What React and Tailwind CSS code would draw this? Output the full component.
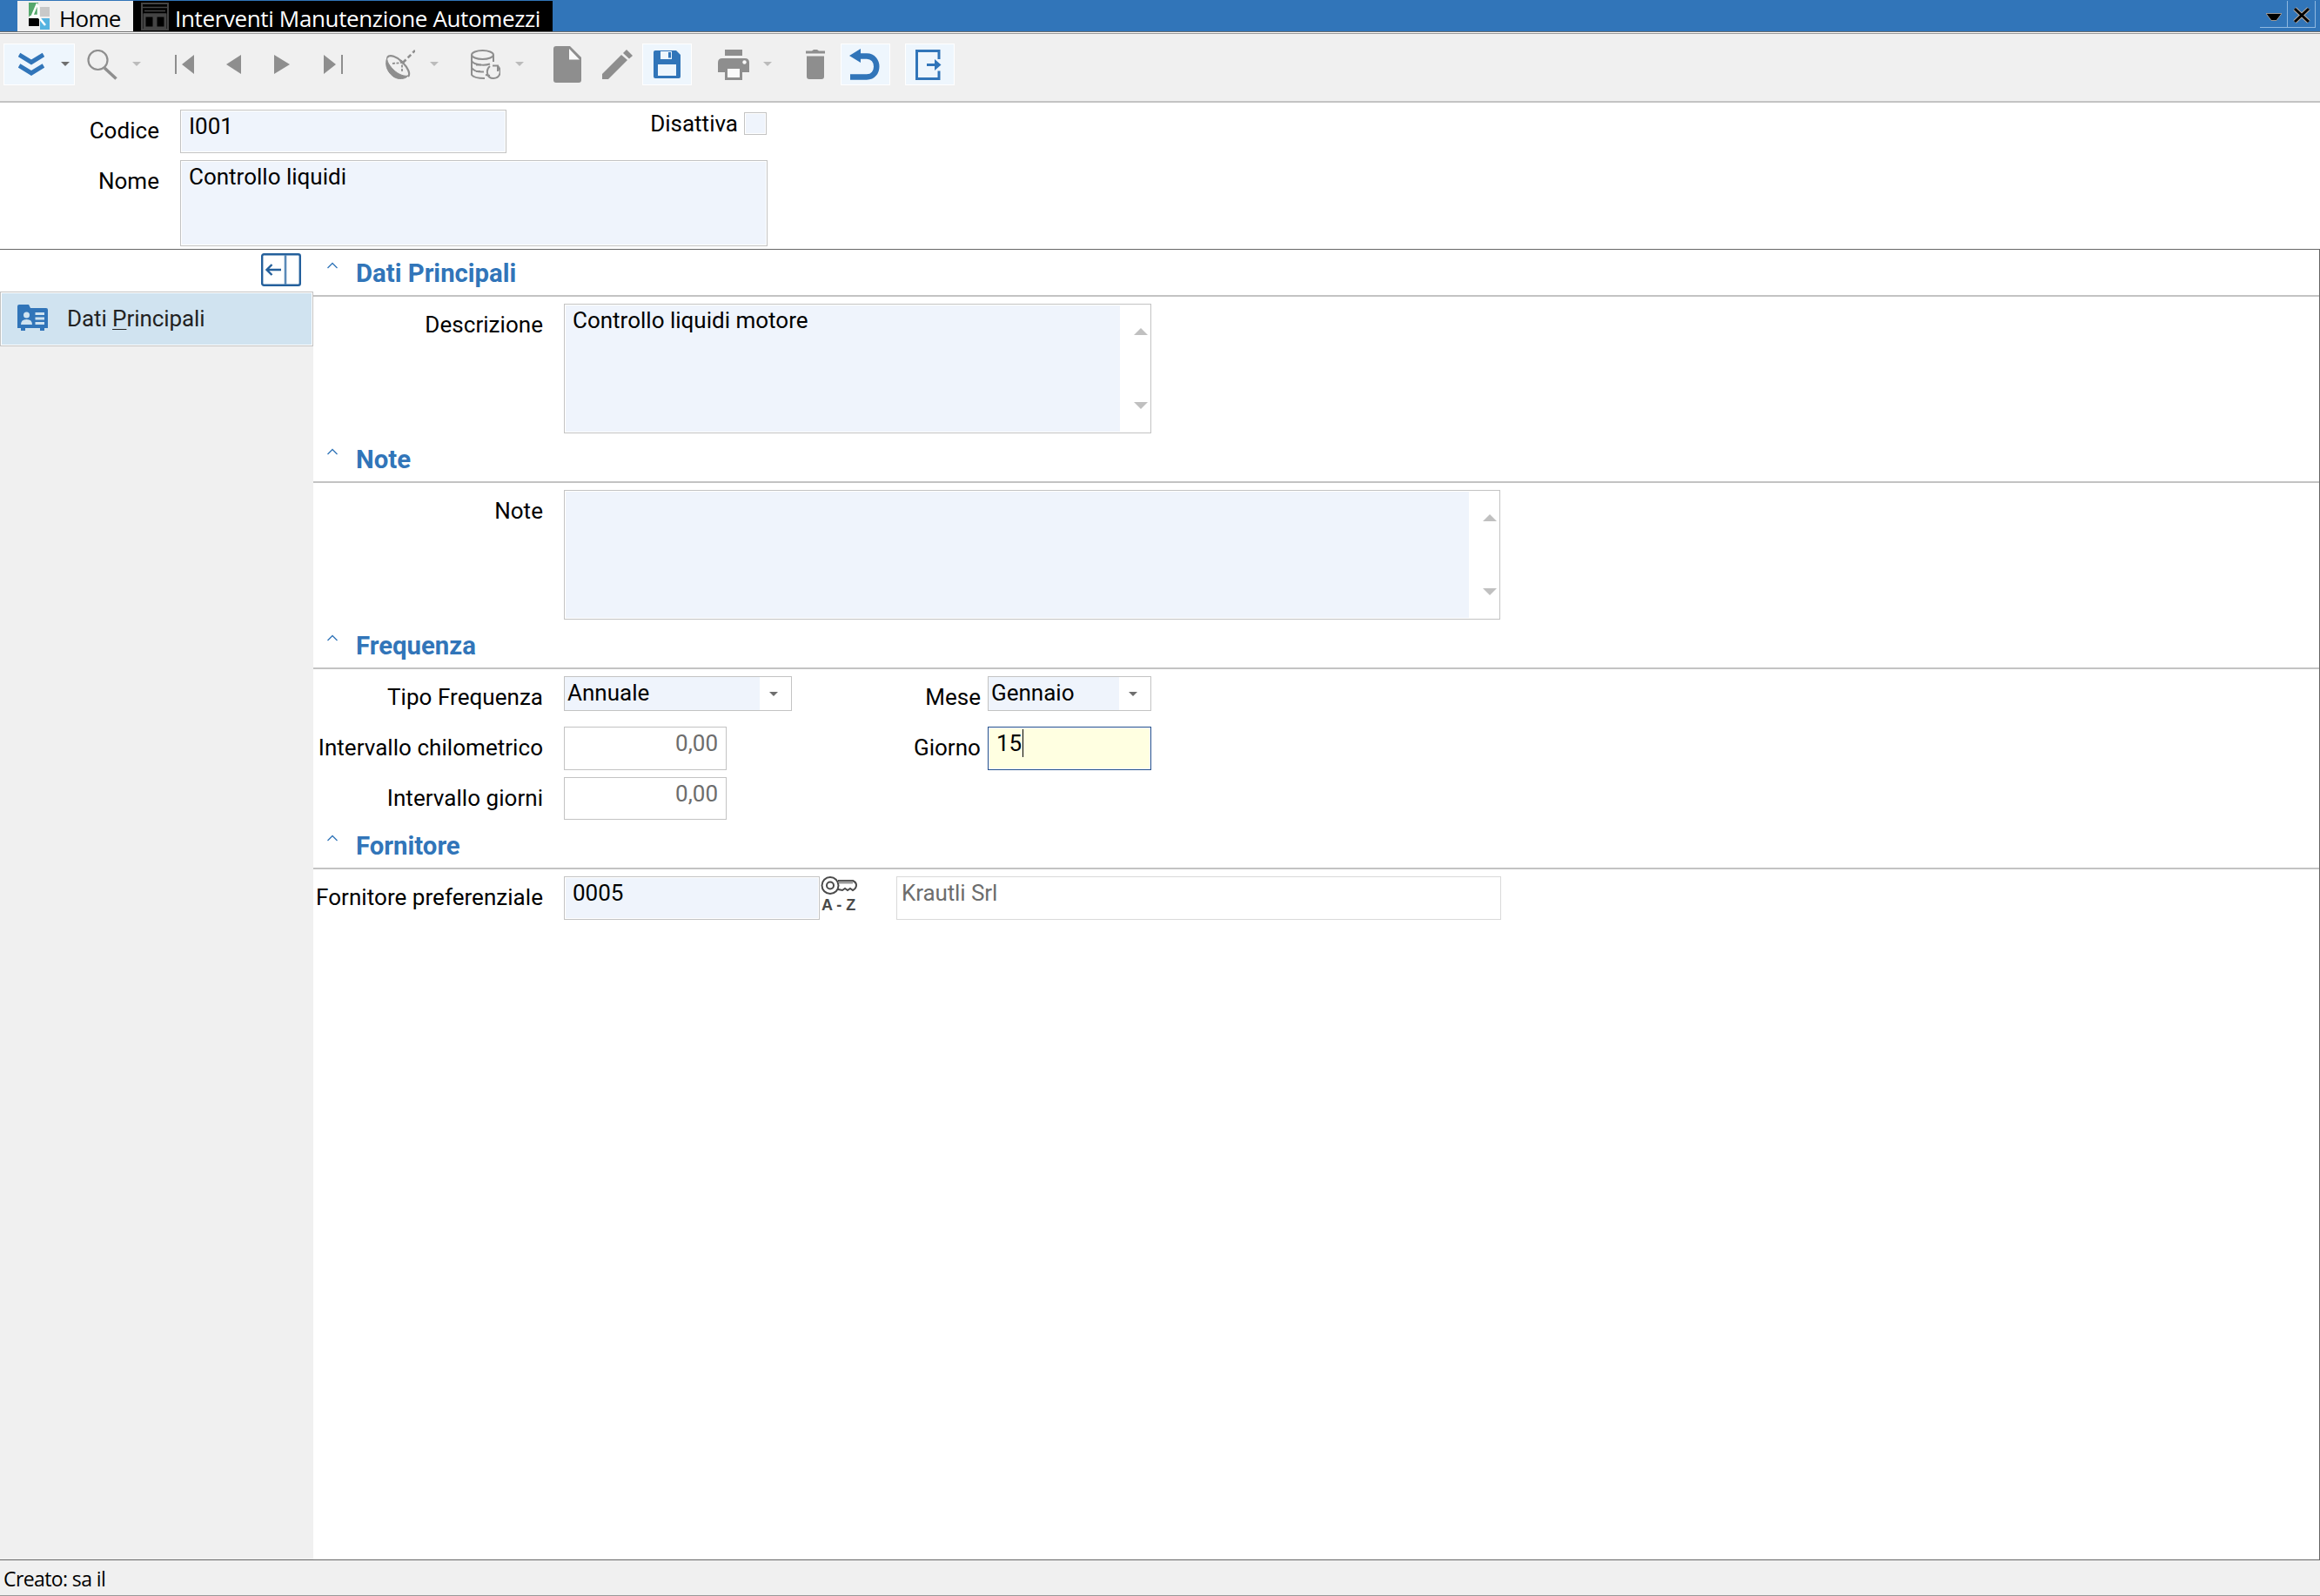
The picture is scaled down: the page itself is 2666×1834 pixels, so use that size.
import React from "react";
import { clsx } from "clsx";

/* Small shared shapes */

function Triangle({ up, className }) {
  return (
    <svg viewBox="0 0 16 8" preserveAspectRatio="none" className={className} fill="currentColor">
      <path d={up ? "M8 0L16 8H0Z" : "M0 0H16L8 8Z"} />
    </svg>
  );
}

function DropArrow({ className }) {
  return <Triangle className={clsx("w-[10px] h-[5px] shrink-0", className)} />;
}

/* Title bar */

function HomeLogo() {
  return (
    <svg width="25" height="31" viewBox="0 0 25 31" className="shrink-0">
      <path d="M0 0H10L0 17Z" fill="#55a86c" />
      <path d="M4 0H11V15H0V8Z" fill="#55a86c" />
      <path d="M13 5H24V16H13Z" fill="#c9c9c9" />
      <path d="M0 18H12V27H0Z" fill="#000" />
      <path d="M13 18H24V31H13Z" fill="#55b3e0" />
      <path d="M10 1L4 15H11M11 3V16L19 26" fill="none" stroke="#fff" strokeWidth="2.5" />
    </svg>
  );
}

function FormIcon() {
  return (
    <svg width="32" height="32" viewBox="0 0 32 32" className="shrink-0" fill="none" stroke="#444" strokeWidth="2">
      <path d="M1 1H31V31H1Z" />
      <path d="M1 5.500H31M4 9.500H28" strokeWidth="1.5" />
      <path d="M3 14.500H29" strokeWidth="4" />
      <path d="M4 14H28V29H4Z" strokeWidth="3" />
      <path d="M16 14V29" strokeWidth="5" />
    </svg>
  );
}

function TitleBar() {
  return (
    <div className="flex h-9 bg-[#3175b9] pt-px pl-5 font-['Open_Sans','Noto_Sans',sans-serif] text-[26px] leading-[35px]">
      <div className="flex w-[133px] bg-[#f0f0f0] pl-[13px] pt-[2px] text-black">
        <HomeLogo />
        <span className="mt-px ml-[10px] tracking-[-0.7px]">Home</span>
      </div>
      <div className="flex h-9 w-[482px] bg-black pl-[9px] pt-[2px] text-white">
        <FormIcon />
        <span className="mt-px ml-[7px] whitespace-nowrap tracking-[-0.36px]">
          Interventi Manutenzione Automezzi
        </span>
      </div>
      <div className="ml-auto mr-[5px] flex h-[31px] border-b border-[#8fb8e0] text-black">
        <div className="flex w-8 justify-center border-r border-[#8fb8e0] pt-[14px]">
          <svg width="18" height="9" viewBox="0 0 18 9">
            <path d="M0 .5H18L12 8.500H6Z" fill="#000" stroke="#b9aba0" strokeWidth=".8" />
          </svg>
        </div>
        <div className="flex w-8 justify-center border-r border-[#8fb8e0] pt-[7px]">
          <svg width="20" height="19" viewBox="0 0 20 19" fill="none">
            <path d="M2 2L18 17M18 2L2 17" stroke="#b9aba0" strokeWidth="5" />
            <path d="M2 2L18 17M18 2L2 17" stroke="#000" strokeWidth="3" />
          </svg>
        </div>
      </div>
    </div>
  );
}

/* Toolbar */

function Tool({ children, active, arrow, className }) {
  return (
    <div
      className={clsx(
        "flex h-12 shrink-0 items-center",
        active ? "border border-white bg-[#eef6fd] text-[#3175b9]" : "text-[#8e8e8e]",
        className
      )}
    >
      {children}
      {arrow && <DropArrow className={clsx("mb-px", arrow)} />}
    </div>
  );
}

function Toolbar() {
  return (
    <div className="border-t border-[#6f6f6f] bg-white pt-px">
      <div className="flex h-[80px] border-t border-b-2 border-t-[#999] border-b-[#c3c3c3] bg-[#f0f0f0] pt-[11px] pl-1">
        <Tool active arrow="ml-[19px] text-[#6e6e6e]" className="w-[82px] pl-4">
          <svg width="30" height="28" viewBox="0 0 30 28" fill="none" stroke="currentColor" strokeWidth="5">
            <path d="M1 3L15 11.5L29 3M1 15.5L15 24L29 15.5" />
          </svg>
        </Tool>
        <Tool arrow="ml-[17px] text-[#bbb]" className="ml-[14px]">
          <svg width="35" height="35" viewBox="0 0 35 35" fill="none" stroke="currentColor">
            <circle cx="12.5" cy="12" r="11" strokeWidth="2.2" />
            <path d="M20 21L33.5 33.5" strokeWidth="3.5" />
          </svg>
        </Tool>
        <Tool className="ml-[39px]">
          <svg width="22" height="22" viewBox="0 0 22 22" fill="currentColor">
            <path d="M0 0H2V22H0ZM22 0V22L8 11Z" />
          </svg>
        </Tool>
        <Tool className="ml-[37px]">
          <svg width="17" height="22" viewBox="0 0 17 22" fill="currentColor">
            <path d="M17 0V22L0 11Z" />
          </svg>
        </Tool>
        <Tool className="ml-[38px]">
          <svg width="18" height="22" viewBox="0 0 18 22" fill="currentColor">
            <path d="M0 0V22L18 11Z" />
          </svg>
        </Tool>
        <Tool className="ml-[39px]">
          <svg width="22" height="22" viewBox="0 0 22 22" fill="currentColor">
            <path d="M0 0V22L14 11ZM20 0H22V22H20Z" />
          </svg>
        </Tool>
        <Tool arrow="ml-[17px] text-[#bbb]" className="ml-[49px]">
          <svg width="34" height="34" viewBox="0 0 34 34" fill="none" stroke="currentColor">
            <path d="M2 9C-1 16 1 25 9 31C15 35 23 34 26 30C22 31 15 29 9 23C3 17 1 12 2 9Z" fill="currentColor" />
            <path d="M2 9C5 5 13 8 19 14C26 21 29 28 26 31" strokeWidth="2.200" />
            <path d="M8 16L19 15L19 25" strokeWidth="1.8" strokeDasharray="3 1.5" />
            <path d="M17 12.500L22.500 17.500M20 15L34 1" strokeWidth="2.600" strokeDasharray="5 3" />
          </svg>
        </Tool>
        <Tool arrow="ml-[17px] text-[#bbb]" className="ml-[37px]">
          <svg width="34" height="34" viewBox="0 0 34 34" fill="none" stroke="currentColor" strokeWidth="2">
            <ellipse cx="13.500" cy="6" rx="12.500" ry="5" />
            <path d="M1 6V29C3 32 9 33 16 33M26 6V14M1 13C4 18 16 18.500 22 16.500M1 21C4 25 9 26 15 25.500" />
            <path d="M6 17.500H12M6 25H11" />
            <path d="M22 19C17 23 18 33 26 33C34 33 36 24 31 19M31 25V18.500H25M22 30L17 29" />
          </svg>
        </Tool>
        <Tool className="ml-[34px]">
          <svg width="32" height="42" viewBox="0 0 32 42">
            <path d="M3 0H19L32 13V39Q32 42 29 42H3Q0 42 0 39V3Q0 0 3 0Z" fill="currentColor" />
            <path d="M18 3V15.500H30Z" fill="#fafafa" />
          </svg>
        </Tool>
        <Tool className="ml-6">
          <svg width="35" height="35" viewBox="0 0 35 35" fill="currentColor">
            <path d="M0 28L22 6L29 12L7 34H0Z" />
            <path d="M24 4L28 0L35 7L31 10.500Z" />
          </svg>
        </Tool>
        <Tool active className="ml-[11px] w-[57px] pl-3">
          <svg width="31" height="32" viewBox="0 0 31 32">
            <path d="M2 0H26L31 5V30Q31 32 29 32H2Q0 32 0 30V2Q0 0 2 0Z" fill="currentColor" />
            <path d="M8 1H21V10H8ZM5 16H26V29H5Z" fill="#eef6fd" />
            <path d="M17 2H20V8.500H17Z" fill="currentColor" />
          </svg>
        </Tool>
        <Tool arrow="ml-4 text-[#bbb]" className="ml-[30px]">
          <svg width="36" height="35" viewBox="0 0 36 35">
            <path d="M8 0H28V7H8ZM5 10H31Q36 10 36 15V26H28V35H8V26H0V15Q0 10 5 10Z" fill="currentColor" />
            <path d="M11 22H25V32H11Z" fill="#fafafa" />
            <circle cx="30.500" cy="14.500" r="2.200" fill="#fafafa" />
          </svg>
        </Tool>
        <Tool className="ml-[38px]">
          <svg width="24" height="34" viewBox="0 0 24 34" fill="currentColor">
            <path d="M1 1.500H8L10 0H14L16 1.500H23V4.500H1ZM2 7.500H22V31Q22 34 19 34H5Q2 34 2 31Z" />
          </svg>
        </Tool>
        <Tool active className="ml-[17px] w-[57px] pl-[9px]">
          <svg width="36" height="36" viewBox="0 0 36 36">
            <path d="M0 8L13 0V16Z" fill="currentColor" />
            <path d="M10 8.500H20C35 8.500 35 32.500 20 32.500H1" fill="none" stroke="currentColor" strokeWidth="6.500" />
          </svg>
        </Tool>
        <Tool active className="ml-[17px] w-[57px] pl-[11px]">
          <svg width="30" height="35" viewBox="0 0 30 35" fill="none" stroke="currentColor" strokeWidth="3">
            <path d="M27 11V1.500H1.500V33.500H27V24.500" />
            <path d="M13 17.500H25" />
            <path d="M22 11L29.500 17.500L22 24Z" fill="currentColor" stroke="none" />
          </svg>
        </Tool>
      </div>
    </div>
  );
}

/* Form controls */

function Label({ children, className }) {
  return (
    <div className={clsx("shrink-0 whitespace-nowrap pt-[9px] text-right tracking-[0.04px]", className)}>
      {children}
    </div>
  );
}

const insetWhite = "shadow-[inset_0_0_0_1px_white]";

function TextField({ children, className }) {
  return (
    <div className={clsx("shrink-0 border border-[#c3c3c3] bg-[#eff4fc] pt-[3px] pl-[9px]", insetWhite, className)}>
      {children}
    </div>
  );
}

function NumberField({ value, className }) {
  return (
    <div className={clsx("w-[187px] shrink-0 border border-[#c3c3c3] pt-[3px] pr-[9px] text-right text-[#6d6d6d]", className)}>
      {value}
    </div>
  );
}

function Select({ value, className }) {
  return (
    <div className={clsx("flex h-10 shrink-0 border border-[#c3c3c3]", className)}>
      <div className="flex-1 bg-[#eff4fc] pt-[3px] pl-[3px]">{value}</div>
      <div className="flex w-9 items-center justify-center text-[#6e6e6e]">
        <DropArrow className="mr-[5px]" />
      </div>
    </div>
  );
}

function TextArea({ value, className }) {
  return (
    <div className={clsx("flex h-[149px] shrink-0 border border-[#c3c3c3] p-px", className)}>
      <div className="flex-1 bg-[#eff4fc] pt-[2px] pl-2">{value}</div>
      <div className="flex w-[34px] flex-col items-end justify-between pt-[26px] pr-[2px] pb-[26px] text-[#c0c0c0]">
        <Triangle up className="h-[8px] w-4" />
        <Triangle className="h-[8px] w-4" />
      </div>
    </div>
  );
}

function Section({ title, children }) {
  return (
    <section className="pb-[3px]">
      <div className="flex h-[54px] border-b-2 border-[#c3c3c3] pl-4">
        <svg width="12" height="8" viewBox="0 0 12 8" className="mt-[14px]" fill="none" stroke="#3175b9" strokeWidth="1.3">
          <path d="M.5 7L6 1.500L11.500 7" />
        </svg>
        <h2 className="ml-[21px] pt-[11px] text-[29.33px] leading-8 font-bold text-[#3175b9]">{title}</h2>
      </div>
      <div className="flex flex-col gap-2 pt-2">{children}</div>
    </section>
  );
}

function RecordHeader() {
  return (
    <div className="flex h-[169px] flex-col gap-2 border-b border-[#666] pt-2">
      <div className="flex">
        <Label className="w-[183px]">Codice</Label>
        <TextField className="ml-6 h-[50px] w-[375px]">I001</TextField>
        <div className="w-[266px] pt-px text-right">Disattiva</div>
        <TextField className="mt-[3px] ml-[7px] h-[26px] w-[26px]" />
      </div>
      <div className="flex">
        <Label className="w-[183px]">Nome</Label>
        <TextField className="ml-6 h-[99px] w-[675px]">Controllo liquidi</TextField>
      </div>
    </div>
  );
}

function Sidebar() {
  return (
    <aside className="flex w-[360px] flex-col bg-[#f0f0f0]">
      <div className="flex h-12 bg-white pt-1 pl-[300px]">
        <svg width="46" height="38" viewBox="0 0 46 38" fill="none" stroke="#24609c" strokeWidth="2.400">
          <rect x="1.200" y="1.200" width="43.600" height="35.600" rx="2" />
          <path d="M28 2V36" strokeWidth="2.600" stroke="#5a8ab8" />
          <path d="M23 19H7M12.500 13L6.500 19L12.500 25" />
        </svg>
      </div>
      <div className={clsx("flex h-[63px] border border-[#c3c3c3] bg-[#d0e3f0] text-[#222]", insetWhite)}>
        <svg width="35" height="31" viewBox="0 0 35 31" className="mt-[14px] ml-[19px]">
          <path d="M0 2Q0 0 2 0H13L15 4H33Q35 4 35 6V27H31V30H26V27H9V30H4V27H0Z" fill="#3175b9" />
          <circle cx="10.500" cy="12" r="3.500" fill="#d0e3f0" />
          <path d="M4 23Q4 17 10.500 17Q17 17 17 23ZM20.500 9H31V12H20.500ZM20.500 14.500H31V17.500H20.500ZM20.500 20H31V23H20.500Z" fill="#d0e3f0" />
        </svg>
        <span className="mt-[15px] ml-[22px] tracking-[-0.08px]">
          Dati <span className="underline decoration-1 underline-offset-[3px]">P</span>rincipali
        </span>
      </div>
    </aside>
  );
}

function LookupIcon() {
  return (
    <div className="ml-px flex w-[42px] flex-col text-[#4a4a4a]">
      <svg width="42" height="22" viewBox="0 0 42 22" fill="none" stroke="currentColor" strokeWidth="2">
        <path d="M20 5H37Q41 7 41 10Q41 14 37 16L34 14L31 16L28 14L25 16L20 15" />
        <path d="M21 7H37" stroke="#999" strokeWidth="3" />
        <circle cx="11" cy="10.500" r="9.500" fill="#fff" />
        <circle cx="11" cy="10.500" r="4" />
      </svg>
      <span className="pl-px font-['Liberation_Sans',sans-serif] text-[18px] leading-[23px] font-bold whitespace-nowrap">
        A - Z
      </span>
    </div>
  );
}

export default function App() {
  return (
    <div className="flex h-[1834px] w-[2666px] flex-col overflow-hidden bg-white font-[Roboto,sans-serif] text-[26px] leading-[30px] text-black">
      <TitleBar />
      <Toolbar />
      <RecordHeader />
      <div className="flex min-h-0 flex-1 border-r border-[#666]">
        <Sidebar />
        <main className="flex-1">
          <Section title="Dati Principali">
            <div className="flex">
              <Label className="w-[264px]">Descrizione</Label>
              <TextArea value="Controllo liquidi motore" className="ml-6 w-[675px]" />
            </div>
          </Section>
          <Section title="Note">
            <div className="flex">
              <Label className="w-[264px]">Note</Label>
              <TextArea className="ml-6 w-[1076px]" />
            </div>
          </Section>
          <Section title="Frequenza">
            <div className="flex h-[50px]">
              <Label className="w-[264px]">Tipo Frequenza</Label>
              <Select value="Annuale" className="ml-6 w-[262px]" />
              <Label className="w-[217px]">Mese</Label>
              <Select value="Gennaio" className="ml-2 w-[188px]" />
            </div>
            <div className="flex">
              <Label className="w-[264px]">Intervallo chilometrico</Label>
              <NumberField value="0,00" className="ml-6 h-[50px]" />
              <Label className="w-[292px]">Giorno</Label>
              <div className={clsx("ml-2 flex h-[50px] w-[188px] border border-[#24508c] bg-[#ffffe1] pt-[2px] pl-[9px]", insetWhite)}>
                <span className="pt-px">15</span>
                <span className="ml-px h-8 w-px bg-black" />
              </div>
            </div>
            <div className="flex">
              <Label className="w-[264px]">Intervallo giorni</Label>
              <NumberField value="0,00" className="ml-6 h-[49px]" />
            </div>
          </Section>
          <Section title="Fornitore">
            <div className="flex">
              <Label className="w-[264px]">Fornitore preferenziale</Label>
              <TextField className="ml-6 h-[50px] w-[294px]">0005</TextField>
              <LookupIcon />
              <div className="ml-[45px] h-[50px] w-[695px] border border-[#d9d9d9] pt-[3px] pl-[5px] tracking-[-0.1px] text-[#6d6d6d]">
                Krautli Srl
              </div>
            </div>
          </Section>
        </main>
      </div>
      <footer className="h-[42px] border-t border-b border-t-[#666] border-b-[#999] bg-[#f0f0f0] pt-[5px] pl-1 font-['Open_Sans','Noto_Sans',sans-serif] text-[23px] leading-8 tracking-[-0.6px]">
        Creato: sa il
      </footer>
    </div>
  );
}
